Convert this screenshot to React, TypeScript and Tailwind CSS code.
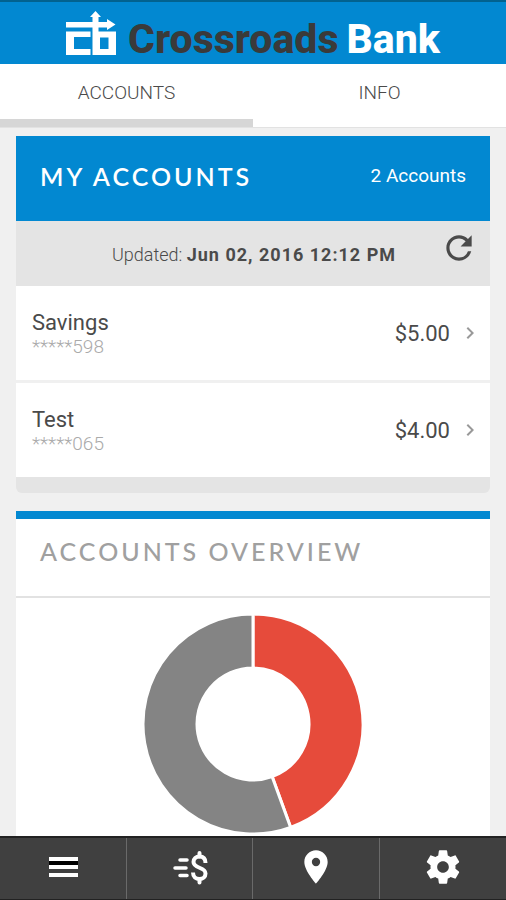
import { MdRefresh, MdLocationOn, MdChevronRight } from 'react-icons/md';

const accounts = [
  { name: 'Savings', number: '*****598', balance: 5 },
  { name: 'Test', number: '*****065', balance: 4 },
];

const colors = ['#e64b3b', '#848484'];

function LogoMark() {
  return (
    <svg viewBox="0 0 50 44" className="w-[50px] h-[44px] shrink-0" fill="#fff" aria-hidden="true">
      {/* Crossing arrows */}
      <path d="M0 11h26.500V6H24l5.500-6 5.500 6h-2.500v5h8.500V8l8.500 5.500L41 19v-2.500H0z" />
      {/* c */}
      <path d="M0 20.500h24.500V26H8v12h16.500v6H0z" />
      {/* b */}
      <path d="M26.500 11h6v9.500H50V44H26.500z M34 26.500v11.500h8.500V26.500z" fillRule="evenodd" />
    </svg>
  );
}

function MenuIcon() {
  return (
    <svg viewBox="0 0 40 40" className="size-10" aria-hidden="true">
      <path d="M6 14h29v4h-29z" fill="#000" />
      <path d="M6 10h29v4h-29zM6 18h29v4h-29zM6 26h29v4h-29z" fill="#fff" />
    </svg>
  );
}

function TransferIcon() {
  return (
    <svg viewBox="0 0 40 40" className="size-10" fill="none" stroke="#fff" aria-hidden="true">
      <path d="M11 13h7M6 21h11M11 28.500h7" strokeWidth="3.500" strokeLinecap="round" />
      <path d="M36.500 16c0-4.500-2.500-6.500-6-6.500s-6 2-6 5.500c0 7 12 4.500 12 11.500 0 3.500-2.500 5.500-6 5.500s-6.500-2-6.500-6.500" strokeWidth="4" />
      <path d="M30.500 6v3.500M30.500 32v3.500" strokeWidth="4" strokeLinecap="round" />
    </svg>
  );
}

function GearIcon() {
  return (
    <svg viewBox="0 0 24 24" className="size-10" fill="#fff" aria-hidden="true">
      <path d="M19.430 12.980c.040-.320.070-.640.070-.980s-.030-.660-.070-.980l2.110-1.650c.190-.150.240-.420.120-.640l-2-3.460c-.120-.220-.390-.300-.610-.220l-2.490 1c-.520-.400-1.080-.730-1.690-.980l-.380-2.650C14.460 2.180 14.250 2 14 2h-4c-.250 0-.460.180-.490.420l-.380 2.650c-.610.250-1.170.590-1.690.980l-2.490-1c-.230-.090-.490 0-.610.220l-2 3.460c-.130.220-.070.490.120.640l2.110 1.650c-.040.320-.070.650-.070.980s.030.660.070.980l-2.110 1.650c-.190.150-.240.420-.120.640l2 3.460c.120.220.390.300.610.220l2.490-1c.520.400 1.080.730 1.690.980l.380 2.650c.030.240.240.420.490.420h4c.250 0 .460-.180.490-.420l.380-2.650c.610-.250 1.170-.590 1.690-.980l2.490 1c.230.090.490 0 .610-.220l2-3.460c.120-.220.070-.490-.120-.640l-2.110-1.650zM12 15.500c-1.930 0-3.500-1.570-3.500-3.500s1.570-3.500 3.500-3.500 3.500 1.570 3.500 3.500-1.570 3.500-3.500 3.500z" />
    </svg>
  );
}

const nav = [
  { label: 'Menu', icon: <MenuIcon /> },
  { label: 'Transfer', icon: <TransferIcon /> },
  { label: 'Locations', icon: <MdLocationOn size={40} /> },
  { label: 'Settings', icon: <GearIcon /> },
];

// Ring segment between two fractions of the circle, starting at 12 o'clock
function segment(from: number, to: number) {
  const outer = 110;
  const inner = 56;
  const point = (r: number, t: number) =>
    `${110 + r * Math.sin(t * 2 * Math.PI)} ${110 - r * Math.cos(t * 2 * Math.PI)}`;
  const large = to - from > 0.5 ? 1 : 0;
  return `M${point(outer, from)}A${outer} ${outer} 0 ${large} 1 ${point(outer, to)}L${point(inner, to)}A${inner} ${inner} 0 ${large} 0 ${point(inner, from)}Z`;
}

function BalanceChart() {
  const total = accounts.reduce((sum, a) => sum + a.balance, 0);
  // Smallest balance goes first
  const sorted = [...accounts].sort((a, b) => a.balance - b.balance);
  let start = 0;
  return (
    <svg viewBox="0 0 220 220" className="size-[220px]" role="img" aria-label="Balance by account">
      {sorted.map((a, i) => {
        const from = start;
        start += a.balance / total;
        return <path key={a.name} d={segment(from, start)} fill={colors[i]} stroke="#fff" strokeWidth="3" />;
      })}
    </svg>
  );
}

export default function App() {
  return (
    <div className="flex h-screen flex-col bg-[#f0f0f0] font-[Roboto,sans-serif] text-[#4a4a4a]">
      {/* Brand */}
      <header className="flex h-16 shrink-0 items-start justify-center gap-3 border-t-2 border-[#02628f] bg-[#0288d1] pt-[9px]">
        <LogoMark />
        <p className="flex gap-2 text-[41px] leading-[56px] font-extrabold">
          <span className="text-[#3a3a3a]">Crossroads</span>
          <span className="text-white">Bank</span>
        </p>
      </header>

      {/* Tabs */}
      <nav className="grid h-16 shrink-0 grid-cols-2 border-b border-[#e2e2e2] bg-white text-center text-[19px] leading-7 font-light">
        <a href="#accounts" className="border-b-8 border-[#d6d6d6] pt-[15px]">ACCOUNTS</a>
        <a href="#info" className="pt-[15px]">INFO</a>
      </nav>

      <main className="min-h-0 flex-1 space-y-[18px] overflow-y-auto px-4 pt-2 [scrollbar-width:none]">
        <section className="overflow-hidden rounded-b-md bg-[#e4e4e4] pb-4">
          <div className="flex h-[85px] items-start justify-between bg-[#0288d1] px-6 text-white">
            <h1 className="pt-6 font-[Lato,sans-serif] text-[25px] leading-8 font-semibold tracking-[3px]">MY ACCOUNTS</h1>
            <p className="pt-6 text-[19px] leading-8">2 Accounts</p>
          </div>

          <div className="flex h-[65px] items-start pt-2 pr-3 pl-[52px]">
            <p className="flex-1 pt-2.5 text-center text-[18px] leading-8 font-light">
              Updated: <strong className="font-bold tracking-[1px]">Jun 02, 2016 12:12 PM</strong>
            </p>
            <button aria-label="Refresh"><MdRefresh size={38} /></button>
          </div>

          <ul className="space-y-[3px] bg-[#f0f0f0]">
            {accounts.map((a) => (
              <li key={a.name}>
                <a href="#account" className="flex h-[94px] items-center bg-white pr-2 pl-4">
                  <div className="flex-1 pt-1">
                    <p className="text-[22px] leading-6">{a.name}</p>
                    <p className="text-[19px] leading-6 font-light text-[#aaa]">{a.number}</p>
                  </div>
                  <p className="text-[22px]">${a.balance.toFixed(2)}</p>
                  <MdChevronRight size={24} className="ml-2 text-[#999]" />
                </a>
              </li>
            ))}
          </ul>
        </section>

        <section className="border-t-8 border-[#0288d1] bg-white">
          <h2 className="h-[79px] border-b-2 border-[#e2e2e2] px-6 pt-4 font-[Lato,sans-serif] text-[25px] leading-8 font-medium tracking-[3px] text-[#a0a0a0]">
            ACCOUNTS OVERVIEW
          </h2>
          <div className="flex justify-center py-4">
            <BalanceChart />
          </div>
        </section>
      </main>

      {/* Bottom bar */}
      <nav className="grid h-16 shrink-0 grid-cols-4 divide-x divide-[#6a6a6a] border-t-2 border-b border-[#222] bg-[#404040] text-white">
        {nav.map(({ label, icon }) => (
          <button key={label} aria-label={label} className="flex items-start justify-center pt-[9px]">
            {icon}
          </button>
        ))}
      </nav>
    </div>
  );
}
